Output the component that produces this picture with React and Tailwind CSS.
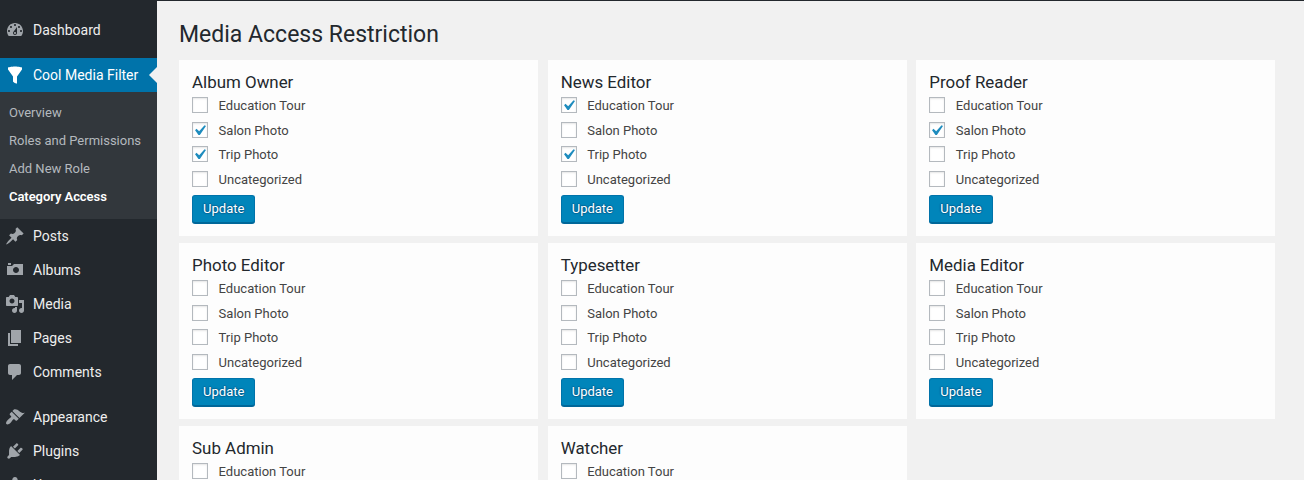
const ICONS = {
  dashboard: 'M3.76 16h12.48c1.1-1.37 1.76-3.11 1.76-5 0-4.42-3.58-8-8-8s-8 3.58-8 8c0 1.89.66 3.63 1.76 5zM10 4c.55 0 1 .45 1 1s-.45 1-1 1-1-.45-1-1 .45-1 1-1zM6 6c.55 0 1 .45 1 1s-.45 1-1 1-1-.45-1-1 .45-1 1-1zm8 0c.55 0 1 .45 1 1s-.45 1-1 1-1-.45-1-1 .45-1 1-1zm-5.37 5.55L12 7v6c0 1.1-.9 2-2 2s-2-.9-2-2c0-.57.24-1.08.63-1.45zM4 10c.55 0 1 .45 1 1s-.45 1-1 1-1-.45-1-1 .45-1 1-1zm12 0c.55 0 1 .45 1 1s-.45 1-1 1-1-.45-1-1 .45-1 1-1zm-5 3c0-.55-.45-1-1-1s-1 .45-1 1 .45 1 1 1 1-.45 1-1z',
  filter: 'M3 4.5v-2s3.34-1 7-1 7 1 7 1v2l-5 7.03v6.97s-1.22-.09-2.25-.59S8 16.5 8 16.5v-4.97z',
  pin: 'M10.44 3.02l1.82-1.82 6.36 6.35-1.83 1.82c-1.05-.68-2.48-.57-3.41.36l-.75.75c-.92.93-1.04 2.35-.35 3.41l-1.83 1.82-2.41-2.41-2.8 2.79c-.42.42-3.38 2.71-3.8 2.29s1.86-3.39 2.28-3.81l2.79-2.79L4.1 9.36l1.83-1.82c1.05.69 2.48.57 3.4-.36l.75-.75c.93-.92 1.05-2.35.36-3.41z',
  camera: 'M6 5V3H3v2h3zm12 10V4H9L7 6H2v9h16zm-7-8c1.66 0 3 1.34 3 3s-1.34 3-3 3-3-1.34-3-3 1.34-3 3-3z',
  media: 'M13 11V4c0-.55-.45-1-1-1h-1.67L9 1H5L3.67 3H2c-.55 0-1 .45-1 1v7c0 .55.45 1 1 1h10c.55 0 1-.45 1-1zM7 4.5c1.38 0 2.5 1.12 2.5 2.5S8.38 9.5 7 9.5 4.5 8.38 4.5 7 5.62 4.5 7 4.5zM14 6h5v10.5c0 1.38-1.12 2.5-2.5 2.5S14 17.88 14 16.5s1.12-2.5 2.5-2.5c.17 0 .34.02.5.05V9h-3V6zm-4 8.05V13h2v3.5c0 1.38-1.12 2.5-2.5 2.5S7 17.88 7 16.5 8.12 14 9.5 14c.17 0 .34.02.5.05z',
  pages: 'M6 15V2h10v13H6zm-1 1h8v2H3V5h2v11z',
  comments: 'M5 2h9c1.1 0 2 .9 2 2v7c0 1.1-.9 2-2 2h-2l-5 5v-5H5c-1.1 0-2-.9-2-2V4c0-1.1.9-2 2-2z',
  brush: 'M14.48 11.06L7.41 3.99l1.5-1.5c.5-.56 2.3-.47 3.51.32 1.21.8 1.43 1.28 2.91 2.1 1.18.64 2.45 1.26 4.45.85zm-.71.71L6.7 4.7 4.93 6.47c-.39.39-.39 1.02 0 1.41l1.06 1.06c.39.39.39 1.03 0 1.42-.6.6-1.43 1.11-2.21 1.69-.35.26-.7.53-1.01.84C1.43 14.23.4 16.08 1.4 17.07c.99 1 2.84-.03 4.18-1.36.31-.31.58-.66.85-1.02.57-.78 1.08-1.61 1.69-2.21.39-.39 1.02-.39 1.41 0l1.06 1.06c.39.39 1.02.39 1.41 0z',
  plug: 'M13.11 4.36L9.87 7.6 8 5.73l3.24-3.24c.35-.34 1.05-.2 1.56.32.52.51.66 1.21.31 1.55zm-8 1.77l.91-1.12 9.01 9.01-1.19.84c-.71.71-2.63 1.16-3.82 1.16H6.14L4.9 17.26c-.59.59-1.54.59-2.12 0-.59-.58-.59-1.53 0-2.12l1.24-1.24v-3.88c0-1.13.4-3.19 1.09-3.89zm7.26 3.97l3.24-3.24c.34-.35 1.04-.21 1.55.31.52.51.66 1.21.31 1.55l-3.24 3.25z',
  users: 'M10 9.25c-2.27 0-2.73-3.44-2.73-3.44C7 4.02 7.82 2 9.97 2c2.16 0 2.98 2.02 2.71 3.81 0 0-.41 3.44-2.68 3.44zm0 2.57L12.72 10c2.39 0 4.52 2.33 4.52 4.53v2.49s-3.65 1.13-7.24 1.13c-3.65 0-7.24-1.13-7.24-1.13v-2.49c0-2.25 1.94-4.48 4.47-4.48z',
};

function MenuItem({ icon, label, active }) {
  return (
    <a className={`relative flex h-[34px] shrink-0 items-center pl-[5px] text-sm leading-[18px] ${active ? 'bg-[#0073aa] text-white' : 'text-[#eeeeee]'}`}>
      <svg viewBox="0 0 20 20" className={`mr-2 size-5 ${active ? 'fill-white' : 'fill-[#a0a5aa]'}`}>
        <path d={ICONS[icon]} />
      </svg>
      {label}
      {active && (
        <svg viewBox="0 0 8 16" className="absolute top-[9px] right-0 h-4 w-2 fill-[#f1f1f1]">
          <path d="M8 0v16L0 8z" />
        </svg>
      )}
    </a>
  );
}

const SUBMENU = ['Overview', 'Roles and Permissions', 'Add New Role', 'Category Access'];
const MAIN = [['pin', 'Posts'], ['camera', 'Albums'], ['media', 'Media'], ['pages', 'Pages'], ['comments', 'Comments']];
const LOWER = [['brush', 'Appearance'], ['plug', 'Plugins'], ['users', 'Users']];

function Sidebar() {
  return (
    <nav className="flex w-[157px] shrink-0 flex-col bg-[#23282d] pt-[13px]">
      <MenuItem icon="dashboard" label="Dashboard" />
      <div className="h-[11px] shrink-0" />
      <MenuItem icon="filter" label="Cool Media Filter" active />
      <ul className="h-[127px] shrink-0 bg-[#32373c] pt-[7px] pl-[9px] text-[13px] leading-7 text-[#b4b9be]">
        {SUBMENU.map((s) => (
          <li key={s} className={s === 'Category Access' ? 'font-semibold text-white tracking-[-0.06px]' : ''}>{s}</li>
        ))}
      </ul>
      {MAIN.map(([icon, label]) => <MenuItem key={label} icon={icon} label={label} />)}
      <div className="h-[11px] shrink-0" />
      {LOWER.map(([icon, label]) => <MenuItem key={label} icon={icon} label={label} />)}
    </nav>
  );
}

const CATEGORIES = ['Education Tour', 'Salon Photo', 'Trip Photo', 'Uncategorized'];
const ROLES = [
  ['Album Owner', [1, 2]],
  ['News Editor', [0, 2]],
  ['Proof Reader', [1]],
  ['Photo Editor', []],
  ['Typesetter', []],
  ['Media Editor', []],
  ['Sub Admin', []],
  ['Watcher', []],
];

function RoleCard({ name, checked }) {
  return (
    <section className="h-44 bg-[#fdfdfd] px-[13.1px] pt-3">
      <h3 className="h-[21px] text-[16.9px] leading-[21px] text-[#23282d]">{name}</h3>
      <div className="flex h-[102px] flex-col pt-1">
        {CATEGORIES.map((c, i) => (
          <label key={c} className="flex h-[24.6px] shrink-0 items-start text-[13px] leading-[18px] text-[#444444]">
            <span className="mr-[10.5px] flex size-4 items-start justify-start border border-[#b4b9be] bg-white shadow-[inset_0_1px_2px_rgba(0,0,0,0.1)]">
              {checked.includes(i) && (
                <svg viewBox="0 0 20 20" className="-mt-[3px] -ml-1 size-[21px] shrink-0 fill-[#1e8cbe]">
                  <path d="M14.83 4.89l1.34.94-5.81 8.38H9.02L5.78 9.67l1.34-1.25 2.57 2.4z" />
                </svg>
              )}
            </span>
            {c}
          </label>
        ))}
      </div>
      <button className="h-7 w-[63.3px] rounded-[3px] border border-[#0073aa] border-b-[#006799] bg-[#0085ba] text-[13px] leading-[26px] text-white shadow-[0_1px_0_#006799] [text-shadow:0_-1px_1px_#006799,1px_0_1px_#006799,0_1px_1px_#006799,-1px_0_1px_#006799]">
        Update
      </button>
    </section>
  );
}

export default function App() {
  return (
    <div className="flex h-[480px] w-[1304px] overflow-hidden bg-[#f1f1f1] font-['Roboto',sans-serif]">
      <Sidebar />
      <main className="min-w-0 flex-1 border-t border-[#23282d] pr-[28.75px] pl-[22px]">
        <h1 className="h-[59px] pt-[19px] text-[23px] leading-[30px] text-[#23282d]">Media Access Restriction</h1>
        <div className="grid grid-cols-[359px_359px_359px] justify-between gap-y-[7px]">
          {ROLES.map(([name, checked]) => <RoleCard key={name} name={name} checked={checked} />)}
        </div>
      </main>
    </div>
  );
}
